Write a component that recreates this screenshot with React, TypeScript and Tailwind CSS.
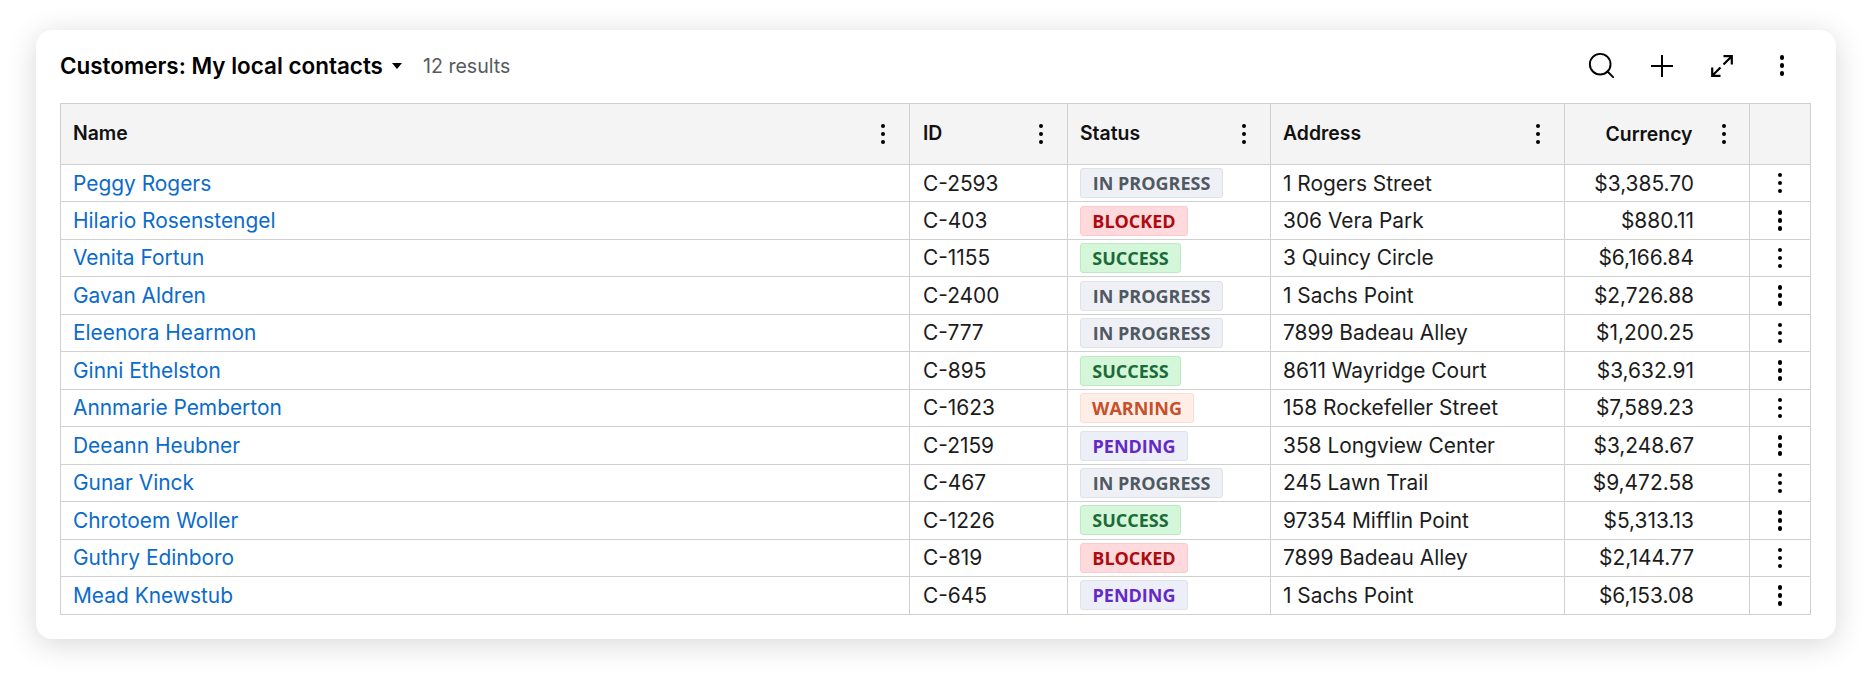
import { Search } from "lucide-react";

type Status = "IN PROGRESS" | "BLOCKED" | "SUCCESS" | "WARNING" | "PENDING";

const rows: Array<[string, string, Status, string, string]> = [
  ["Peggy Rogers", "C-2593", "IN PROGRESS", "1 Rogers Street", "$3,385.70"],
  ["Hilario Rosenstengel", "C-403", "BLOCKED", "306 Vera Park", "$880.11"],
  ["Venita Fortun", "C-1155", "SUCCESS", "3 Quincy Circle", "$6,166.84"],
  ["Gavan Aldren", "C-2400", "IN PROGRESS", "1 Sachs Point", "$2,726.88"],
  ["Eleenora Hearmon", "C-777", "IN PROGRESS", "7899 Badeau Alley", "$1,200.25"],
  ["Ginni Ethelston", "C-895", "SUCCESS", "8611 Wayridge Court", "$3,632.91"],
  ["Annmarie Pemberton", "C-1623", "WARNING", "158 Rockefeller Street", "$7,589.23"],
  ["Deeann Heubner", "C-2159", "PENDING", "358 Longview Center", "$3,248.67"],
  ["Gunar Vinck", "C-467", "IN PROGRESS", "245 Lawn Trail", "$9,472.58"],
  ["Chrotoem Woller", "C-1226", "SUCCESS", "97354 Mifflin Point", "$5,313.13"],
  ["Guthry Edinboro", "C-819", "BLOCKED", "7899 Badeau Alley", "$2,144.77"],
  ["Mead Knewstub", "C-645", "PENDING", "1 Sachs Point", "$6,153.08"],
];

const statusStyles: Record<Status, string> = {
  "IN PROGRESS": "w-[143px] bg-[#eef0f5] border-[#dfe2e9] text-[#505962]",
  BLOCKED: "w-[108px] bg-[#ffdadc] border-[#ffc9cc] text-[#ae0a0f]",
  SUCCESS: "w-[101px] bg-[#d5f7d9] border-[#bdeac3] text-[#1a6b38]",
  WARNING: "w-[114px] bg-[#ffeee8] border-[#ffdcd0] text-[#c6502a]",
  PENDING: "w-[108px] bg-[#eceff7] border-[#dfe2ec] text-[#6528c7]",
};

function Kebab({ className = "" }: { className?: string }) {
  return (
    <span className={`flex flex-col items-center gap-[3.5px] ${className}`}>
      <span className="h-[4.5px] w-[4.5px] rounded-full bg-black" />
      <span className="h-[4.5px] w-[4.5px] rounded-full bg-black" />
      <span className="h-[4.5px] w-[4.5px] rounded-full bg-black" />
    </span>
  );
}

function HeaderCell({ label, className, right }: { label: string; className: string; right?: boolean }) {
  return (
    <div className={`flex items-center border-r border-[#d0d0d0] font-semibold text-[#111] ${className}`}>
      <span className={right ? "ml-auto pt-[1px]" : "pb-[1px]"}>{label}</span>
      {right ? <Kebab className="ml-[29px] mr-[23px]" /> : <Kebab className="ml-auto mr-[24px]" />}
    </div>
  );
}

export default function App() {
  return (
    <div className="h-[681px] w-[1872px] overflow-hidden bg-white pl-9 pt-[30px] font-['Inter',sans-serif] text-[20.9px] text-[#1c1c1c]">
      <div className="h-[609px] w-[1800px] rounded-[16px] bg-white px-[24px] shadow-[0_5px_30px_rgba(0,0,0,0.16)]">
        <div className="flex h-[73px] items-center pb-[2px]">
          <h1 className="text-[22.45px] font-semibold text-black">Customers: My local contacts</h1>
          <span className="ml-[9px] h-0 w-0 border-x-[5.5px] border-t-[6px] border-x-transparent border-t-black" />
          <span className="ml-[21px] pt-[3px] text-[19.6px] text-[#555b61]">12 results</span>
          <div className="ml-auto flex items-center">
            <Search className="h-[31px] w-[31px] text-black" strokeWidth={1.5} />
            <svg className="ml-[34px] h-[22px] w-[22px]" viewBox="0 0 22 22" fill="none" stroke="black" strokeWidth="2">
              <path d="M11 0v22M0 11h22" />
            </svg>
            <svg className="ml-[38px] h-[22px] w-[22px]" viewBox="0 0 22 22" fill="none" stroke="black" strokeWidth="2.2">
              <path d="M12.5 1.2h8.3v8.3M20.8 1.2L12.5 9.5M1.2 12.5v8.3h8.3M1.2 20.8L9.5 12.5" />
            </svg>
            <Kebab className="ml-[47px] mr-[28px]" />
          </div>
        </div>
        <div className="flex w-[1751px] flex-col border-l border-t border-[#d0d0d0]">
          <div className="flex h-[61px] border-b border-[#d0d0d0] bg-[#f4f4f4] text-[19.4px]">
            <HeaderCell label="Name" className="w-[849px] pl-[12px]" />
            <HeaderCell label="ID" className="w-[158px] pl-[13px]" />
            <HeaderCell label="Status" className="w-[203px] pl-[12px]" />
            <HeaderCell label="Address" className="w-[294px] pl-[12px]" />
            <HeaderCell label="Currency" className="w-[185px]" right />
            <div className="w-[61px] border-r border-[#d0d0d0]" />
          </div>
          {rows.map(([name, id, status, address, amount]) => (
            <div key={id} className="flex h-[37.47px] items-stretch border-b border-[#d0d0d0]">
              <div className="flex w-[849px] items-center border-r border-[#d0d0d0] pl-[12px] text-[#0b6bcb]">{name}</div>
              <div className="flex w-[158px] items-center border-r border-[#d0d0d0] pl-[13px]">{id}</div>
              <div className="flex w-[203px] items-center border-r border-[#d0d0d0] pl-[12px]">
                <span
                  className={`flex h-[30px] items-center justify-center rounded-[3px] border pt-[1px] font-['Open_Sans',sans-serif] text-[18px] font-bold ${statusStyles[status]}`}
                >
                  {status}
                </span>
              </div>
              <div className="flex w-[294px] items-center border-r border-[#d0d0d0] pl-[12px]">{address}</div>
              <div className="flex w-[185px] items-center justify-end border-r border-[#d0d0d0] pr-[55px]">{amount}</div>
              <div className="flex w-[61px] items-center justify-center border-r border-[#d0d0d0]">
                <Kebab />
              </div>
            </div>
          ))}
        </div>
      </div>
    </div>
  );
}
